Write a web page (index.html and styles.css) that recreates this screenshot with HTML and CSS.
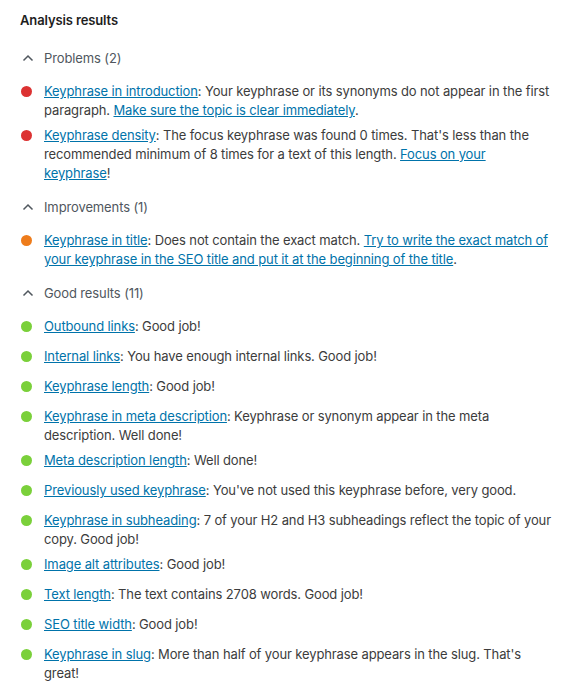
FILE: index.html
```html
<!DOCTYPE html>
<html lang="en">
<head>
<meta charset="utf-8">
<title>Analysis results</title>
<link rel="stylesheet" href="styles.css">
</head>
<body>
<div class="panel">
  <h2 class="title">Analysis results</h2>

  <section class="group">
    <div class="group-head">
      <svg class="chev" width="12" height="8" viewBox="0 0 12 8"><path d="M1.5 6.5 L6 2 L10.5 6.5" fill="none" stroke="#50575e" stroke-width="1.5"/></svg>
      <span>Problems (2)</span>
    </div>
    <ul class="items">
      <li class="item"><span class="dot red"></span><p><a href="#">Keyphrase in introduction</a>: Your keyphrase or its synonyms do not appear in the first paragraph. <a href="#">Make sure the topic is clear immediately</a>.</p></li>
      <li class="item"><span class="dot red"></span><p><a href="#">Keyphrase density</a>: The focus keyphrase was found 0 times. That's less than the recommended minimum of 8 times for a text of this length. <a href="#">Focus on your keyphrase</a>!</p></li>
    </ul>
  </section>

  <section class="group">
    <div class="group-head">
      <svg class="chev" width="12" height="8" viewBox="0 0 12 8"><path d="M1.5 6.5 L6 2 L10.5 6.5" fill="none" stroke="#50575e" stroke-width="1.5"/></svg>
      <span>Improvements (1)</span>
    </div>
    <ul class="items">
      <li class="item"><span class="dot orange"></span><p><a href="#">Keyphrase in title</a>: Does not contain the exact match. <a href="#">Try to write the exact match of your keyphrase in the SEO title and put it at the beginning of the title</a>.</p></li>
    </ul>
  </section>

  <section class="group">
    <div class="group-head">
      <svg class="chev" width="12" height="8" viewBox="0 0 12 8"><path d="M1.5 6.5 L6 2 L10.5 6.5" fill="none" stroke="#50575e" stroke-width="1.5"/></svg>
      <span>Good results (11)</span>
    </div>
    <ul class="items">
      <li class="item"><span class="dot green"></span><p><a href="#">Outbound links</a>: Good job!</p></li>
      <li class="item"><span class="dot green"></span><p><a href="#">Internal links</a>: You have enough internal links. Good job!</p></li>
      <li class="item"><span class="dot green"></span><p><a href="#">Keyphrase length</a>: Good job!</p></li>
      <li class="item"><span class="dot green"></span><p><a href="#">Keyphrase in meta description</a>: Keyphrase or synonym appear in the meta description. Well done!</p></li>
      <li class="item"><span class="dot green"></span><p><a href="#">Meta description length</a>: Well done!</p></li>
      <li class="item"><span class="dot green"></span><p><a href="#">Previously used keyphrase</a>: You've not used this keyphrase before, very good.</p></li>
      <li class="item"><span class="dot green"></span><p><a href="#">Keyphrase in subheading</a>: 7 of your H2 and H3 subheadings reflect the topic of your copy. Good job!</p></li>
      <li class="item"><span class="dot green"></span><p><a href="#">Image alt attributes</a>: Good job!</p></li>
      <li class="item"><span class="dot green"></span><p><a href="#">Text length</a>: The text contains 2708 words. Good job!</p></li>
      <li class="item"><span class="dot green"></span><p><a href="#">SEO title width</a>: Good job!</p></li>
      <li class="item"><span class="dot green"></span><p><a href="#">Keyphrase in slug</a>: More than half of your keyphrase appears in the slug. That's great!</p></li>
    </ul>
  </section>
</div>
</body>
</html>
```
FILE: styles.css
```css
html, body {
  margin: 0;
  padding: 0;
  background: #ffffff;
}
body {
  font-family: Inter, "Liberation Sans", Arial, sans-serif;
  font-size: 13px;
  letter-spacing: -0.12px;
  color: #1e1e1e;
}
.panel {
  padding: 10px 29px 0 20px;
}
.title {
  margin: 0;
  font-size: 13px;
  font-weight: 600;
  line-height: 20px;
  color: #1e1e1e;
}
.group {
  margin-top: 16px;
}
.group + .group {
  margin-top: 12px;
}
.group-head {
  display: flex;
  align-items: center;
  height: 24px;
  color: #50575e;
}
.chev {
  width: 12px;
  margin-left: 2px;
  margin-right: 10px;
}
.items {
  list-style: none;
  margin: 12px 0 0 0;
  padding: 0;
  display: flex;
  flex-direction: column;
  gap: 6px;
}
.item {
  display: flex;
  align-items: flex-start;
  min-height: 24px;
}
.dot {
  flex: none;
  width: 11px;
  height: 11px;
  border-radius: 50%;
  margin: 4px 12px 0 1px;
}
.red { background: #dc3232; }
.orange { background: #ee7c1b; }
.green { background: #7ad03a; }
.item p {
  margin: 0;
  line-height: 19px;
  color: #3c3c3c;
}
.item a {
  color: #0073aa;
  text-decoration: underline;
}
```
